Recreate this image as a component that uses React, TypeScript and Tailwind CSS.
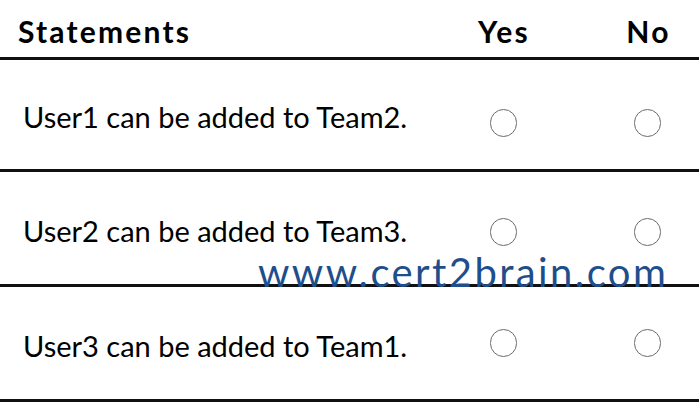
const rows = [
  { text: 'User1 can be added to Team2.', h: 'h-[112px]', textMt: 'mt-[3px]', radioMt: 'mt-[16px]' },
  { text: 'User2 can be added to Team3.', h: 'h-[115px]', textMt: 'mt-[4px]', radioMt: 'mt-[8px]' },
  { text: 'User3 can be added to Team1.', h: 'h-[115px]', textMt: 'mt-[4px]', radioMt: 'mt-0' },
];

const Radio = () => (
  <span className="block w-[27px] h-[28px] rounded-full border border-[#6b6b6b] bg-white" />
);

export default function App() {
  return (
    <div
      className="relative w-[699px] h-[419px] bg-white text-black overflow-hidden"
      style={{ fontFamily: 'Lato, "Open Sans", sans-serif' }}
    >
      <div className="grid grid-cols-[450px_106px_143px] h-[60px] items-center border-b-[3px] border-[#111] text-[30px] font-bold leading-none tracking-[2.2px]">
        <div className="pl-[18px] mt-[4px]">Statements</div>
        <div className="text-center mt-[4px] pl-[2px]">Yes</div>
        <div className="text-center pl-[42px] mt-[4px]">No</div>
      </div>
      {rows.map((r) => (
        <div
          key={r.text}
          className={`grid grid-cols-[450px_106px_143px] items-center border-b-[3px] border-[#111] ${r.h}`}
        >
          <div className={`pl-[23px] text-[29px] leading-none ${r.textMt}`}>{r.text}</div>
          <div className={`flex justify-center ${r.radioMt}`}>
            <Radio />
          </div>
          <div className={`flex justify-center pl-[40px] ${r.radioMt}`}>
            <Radio />
          </div>
        </div>
      ))}
      <div className="absolute left-[258px] top-[252px] text-[40px] leading-none text-[#1f4e8c] tracking-[2.4px]">
        www.cert2brain.com
      </div>
    </div>
  );
}
